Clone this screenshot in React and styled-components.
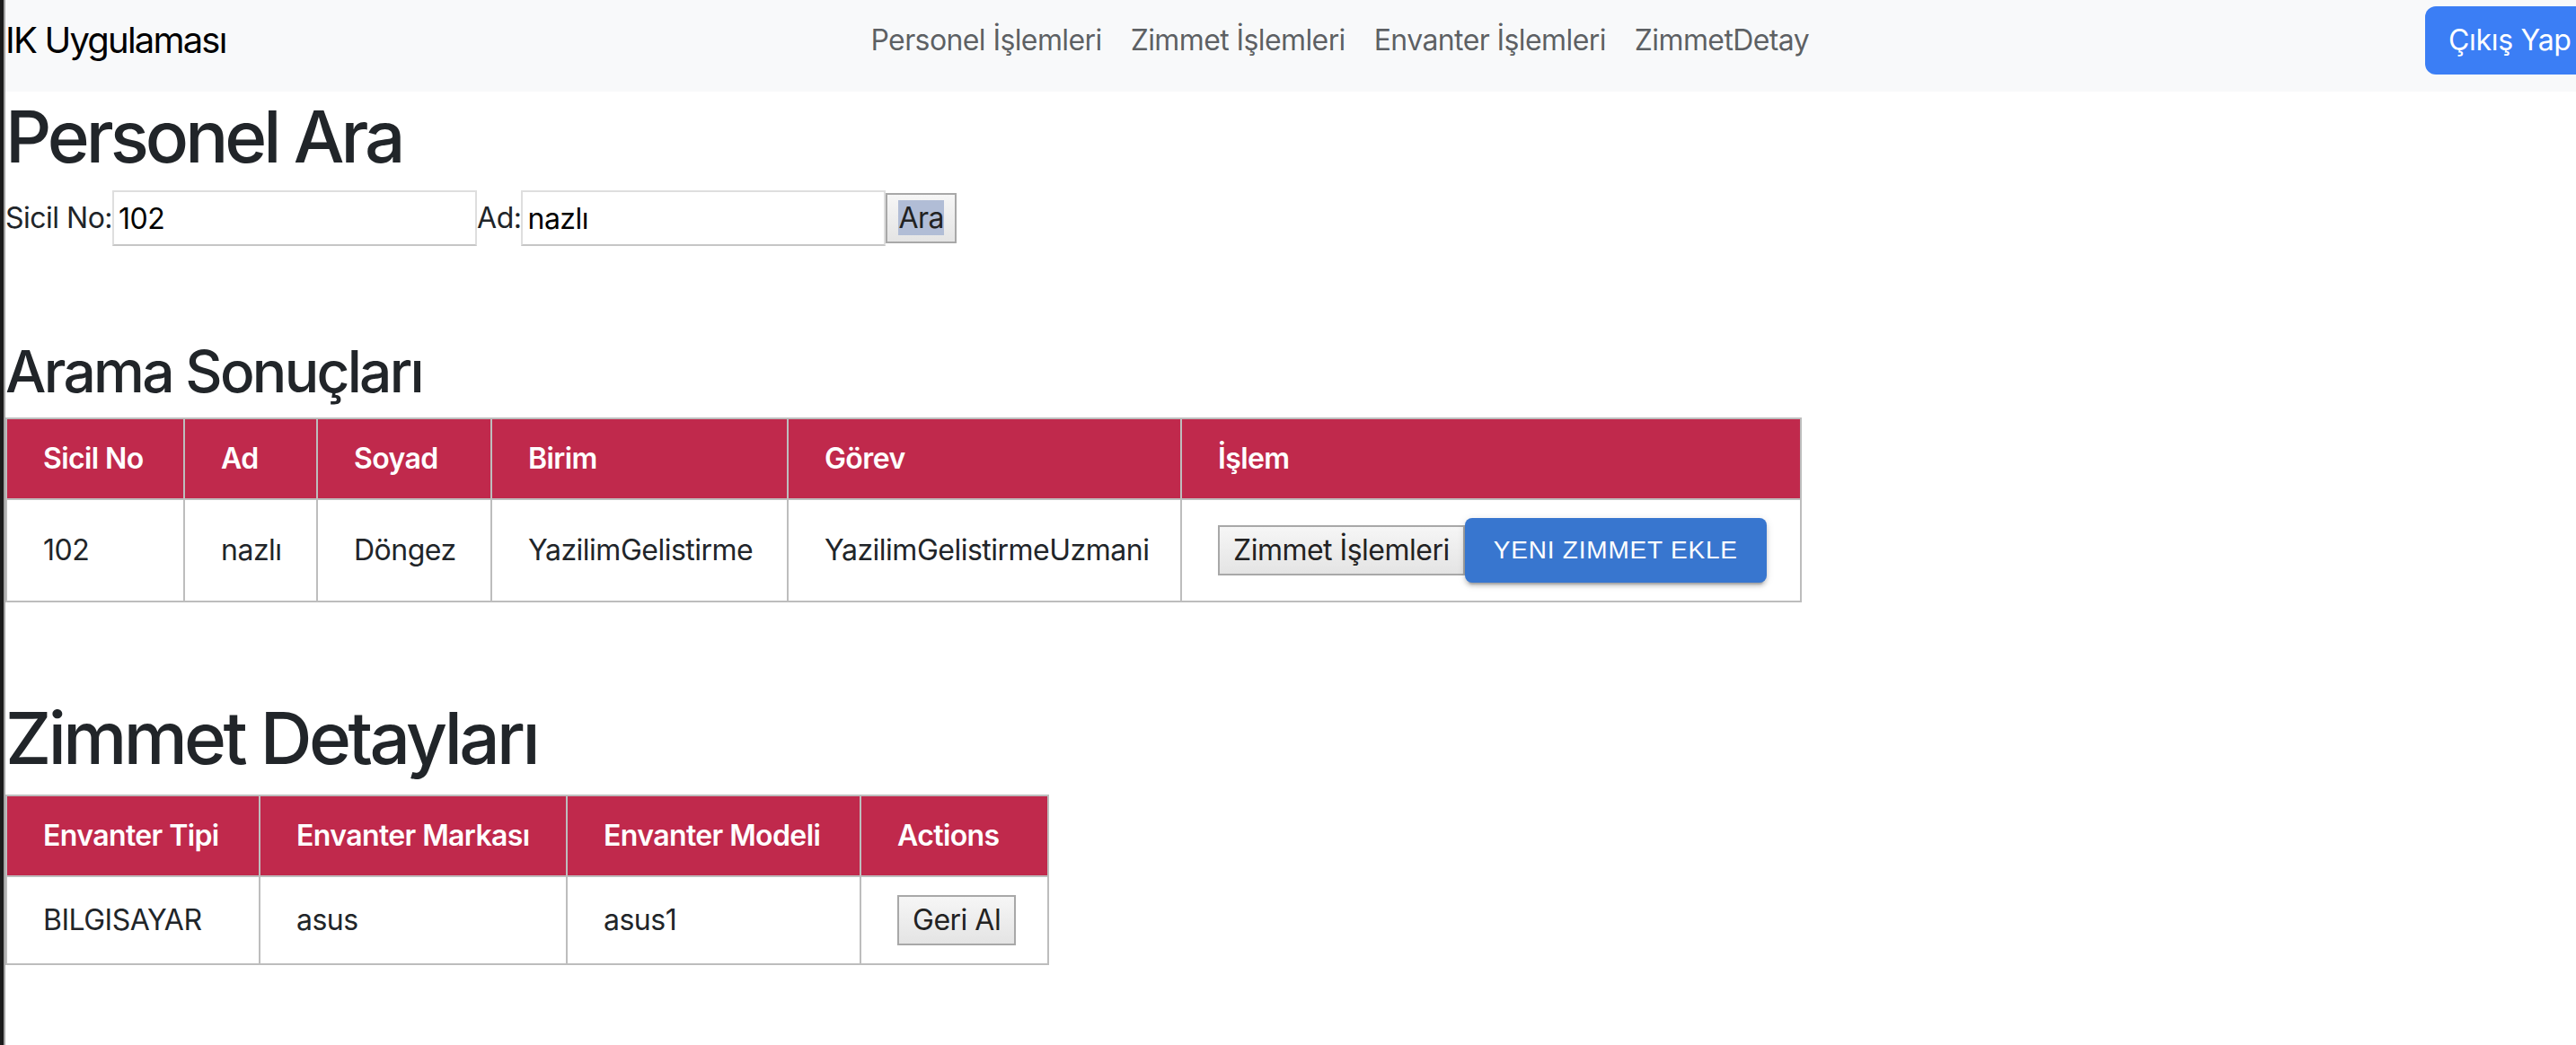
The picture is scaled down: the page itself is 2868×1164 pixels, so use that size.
import React from 'react'
import styled, { createGlobalStyle } from 'styled-components'

const GlobalStyle = createGlobalStyle`
  html, body {
    margin: 0;
    padding: 0;
    background: #fff;
  }
  body {
    border-left: 4px solid #1b1b1b;
    overflow-x: hidden;
    font-family: Inter, "Noto Sans", "Liberation Sans", sans-serif;
    font-size: 32px;
    line-height: 1.5;
    color: #212529;
  }
`

const Page = styled.div`
  border-left: 2px solid #a3a3a3;
  min-height: 1164px;
`

const Navbar = styled.nav`
  display: flex;
  align-items: center;
  width: 2900px;
  height: 102px;
  box-sizing: border-box;
  padding: 7px 0 19px;
  background: #f8f9fa;
`

const Brand = styled.span`
  font-size: 40px;
  line-height: 1.5;
  margin-right: 32px;
  color: #000;
  letter-spacing: -1.8px;
`

const NavLinks = styled.ul`
  display: flex;
  list-style: none;
  margin: 0 auto;
  padding: 0;
`

const NavLink = styled.li`
  padding: 0 16px;
  color: rgba(33, 37, 41, 0.72);
  letter-spacing: -0.6px;
`

const LogoutButton = styled.button`
  flex-shrink: 0;
  width: 206px;
  height: 76px;
  padding: 0 26px;
  text-align: left;
  border: none;
  border-radius: 12px;
  background: #3b7ef5;
  color: #fff;
  font: inherit;
  letter-spacing: -0.3px;
`

const Title = styled.h1`
  font-size: 80px;
  font-weight: 500;
  line-height: 1.2;
  letter-spacing: ${p => p.$spacing || -4}px;
  margin: ${p => p.$top || 2}px 0 ${p => p.$bottom || 12}px;
`

const SubTitle = styled.h2`
  font-size: 64px;
  font-weight: 500;
  line-height: 1.2;
  letter-spacing: -2.7px;
  margin: 102px 0 12px;
`

const SearchForm = styled.form`
  display: flex;
  align-items: center;
  height: 62px;
  margin: 0;
`

const Label = styled.label`
  letter-spacing: -0.5px;
`

const TextInput = styled.input`
  width: 406px;
  height: 62px;
  box-sizing: border-box;
  padding: 0 5px;
  border: 2px solid #dedede;
  border-bottom-color: #c6c6c6;
  font: inherit;
  letter-spacing: -0.5px;
  color: #000;
  background: #fff;
  outline: none;
`

const PlainButton = styled.button`
  height: 56px;
  box-sizing: border-box;
  padding: 0 ${p => p.$pad || 15}px;
  border: 2px solid #a8a8a8;
  border-radius: 0;
  background: linear-gradient(#f6f6f6, #e4e4e4);
  font: inherit;
  line-height: 48px;
  letter-spacing: -0.5px;
  color: #222;
  vertical-align: middle;
`

const Selected = styled.span`
  background: #b1bdd6;
`

const AddButton = styled.button`
  height: 72px;
  padding: 0 32px;
  border: none;
  border-radius: 8px;
  background: #3876cf;
  color: #fff;
  font-family: "Liberation Sans", Arial, sans-serif;
  font-size: 28px;
  letter-spacing: 0.8px;
  text-transform: uppercase;
  vertical-align: middle;
  box-shadow: 0 6px 2px -4px rgba(0, 0, 0, 0.2), 0 4px 4px 0 rgba(0, 0, 0, 0.14),
    0 2px 10px 0 rgba(0, 0, 0, 0.12);
`

const Table = styled.table`
  border-collapse: collapse;
  table-layout: fixed;
  width: ${p => p.$width}px;
`

const HeadCell = styled.th`
  background: #c0294c;
  color: #fff;
  font-weight: 600;
  text-align: left;
  padding: 20px 40px;
  border: 2px solid #bdbdbd;
  letter-spacing: -0.6px;
  white-space: nowrap;
`

const Cell = styled.td`
  padding: 20px 40px;
  border: 2px solid #bdbdbd;
  vertical-align: middle;
  letter-spacing: -0.5px;
  white-space: nowrap;
`

const resultCols = [198, 148, 194, 330, 438, 690]
const detailCols = [282, 342, 327, 209]

function DataTable({ cols, heads, children }) {
  const width = cols.reduce((a, b) => a + b, 0)
  return (
    <Table $width={width}>
      <colgroup>
        {cols.map((w, i) => (
          <col key={i} style={{ width: w }} />
        ))}
      </colgroup>
      <thead>
        <tr>
          {heads.map(h => (
            <HeadCell key={h}>{h}</HeadCell>
          ))}
        </tr>
      </thead>
      <tbody>{children}</tbody>
    </Table>
  )
}

export default function App() {
  return (
    <Page>
      <GlobalStyle />
      <Navbar>
        <Brand>IK Uygulaması</Brand>
        <NavLinks>
          <NavLink>Personel İşlemleri</NavLink>
          <NavLink>Zimmet İşlemleri</NavLink>
          <NavLink>Envanter İşlemleri</NavLink>
          <NavLink>ZimmetDetay</NavLink>
        </NavLinks>
        <LogoutButton>Çıkış Yap</LogoutButton>
      </Navbar>

      <Title>Personel Ara</Title>
      <SearchForm onSubmit={e => e.preventDefault()}>
        <Label>Sicil No:</Label>
        <TextInput defaultValue="102" />
        <Label>Ad:</Label>
        <TextInput defaultValue="nazlı" />
        <PlainButton $pad={12}>
          <Selected>Ara</Selected>
        </PlainButton>
      </SearchForm>

      <SubTitle>Arama Sonuçları</SubTitle>
      <DataTable
        cols={resultCols}
        heads={['Sicil No', 'Ad', 'Soyad', 'Birim', 'Görev', 'İşlem']}
      >
        <tr>
          <Cell>102</Cell>
          <Cell>nazlı</Cell>
          <Cell>Döngez</Cell>
          <Cell>YazilimGelistirme</Cell>
          <Cell>YazilimGelistirmeUzmani</Cell>
          <Cell>
            <PlainButton>Zimmet İşlemleri</PlainButton>
            <AddButton>Yeni Zimmet Ekle</AddButton>
          </Cell>
        </tr>
      </DataTable>

      <Title $top={103} $bottom={15} $spacing={-3.6}>
        Zimmet Detayları
      </Title>
      <DataTable
        cols={detailCols}
        heads={['Envanter Tipi', 'Envanter Markası', 'Envanter Modeli', 'Actions']}
      >
        <tr>
          <Cell>BILGISAYAR</Cell>
          <Cell>asus</Cell>
          <Cell>asus1</Cell>
          <Cell>
            <PlainButton>Geri Al</PlainButton>
          </Cell>
        </tr>
      </DataTable>
    </Page>
  )
}
